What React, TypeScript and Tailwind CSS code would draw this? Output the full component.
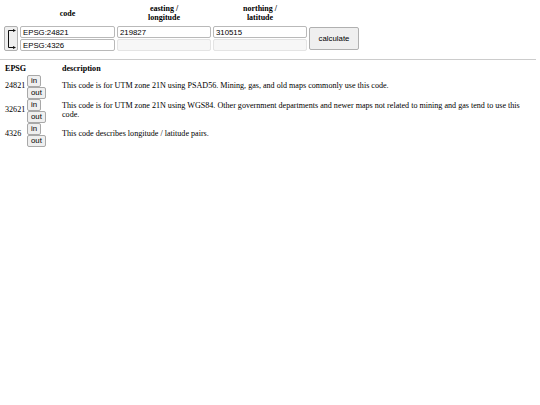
import type { ReactNode } from "react";

const serif = "font-['Liberation_Serif','Times_New_Roman',serif]";
const sans = "font-['Liberation_Sans',Arial,sans-serif]";

const SwapIcon = () => (
  <svg width="9" height="20" viewBox="0 0 9 20" fill="none" stroke="#111" strokeWidth="1">
    <path d="M7 1.5 H1.5 V18.5 H7" />
    <path d="M6 0 L9 1.5 L6 3 Z" fill="#111" stroke="none" />
    <path d="M6 17 L9 18.5 L6 20 Z" fill="#111" stroke="none" />
  </svg>
);

const Field = ({ value, disabled }: { value?: string; disabled?: boolean }) => (
  <input
    readOnly
    disabled={disabled}
    value={value ?? ""}
    className={`${sans} block h-[12px] w-full rounded-[2px] border px-[2px] text-[7.8px] leading-none text-black outline-none ${
      disabled ? "border-[#e4e4e4] bg-[#f7f7f7]" : "border-[#b9b9b9] bg-white"
    }`}
  />
);

const SmallButton = ({ children }: { children: ReactNode }) => (
  <button
    type="button"
    className={`${sans} block h-[12px] rounded-[2px] border border-[#a8a8a8] bg-[#efefef] px-[3px] text-[7.8px] leading-none text-black`}
  >
    {children}
  </button>
);

const Head = ({ children }: { children: ReactNode }) => (
  <div className={`${serif} flex items-center justify-center text-center text-[8px] font-bold leading-[9px] text-black`}>
    {children}
  </div>
);

const codes = [
  {
    epsg: "24821",
    text: "This code is for UTM zone 21N using PSAD56. Mining, gas, and old maps commonly use this code.",
  },
  {
    epsg: "32621",
    text: "This code is for UTM zone 21N using WGS84. Other government departments and newer maps not related to mining and gas tend to use this code.",
  },
  {
    epsg: "4326",
    text: "This code describes longitude / latitude pairs.",
  },
];

export default function App() {
  return (
    <div className={`${serif} h-[405px] w-[540px] bg-white text-black`}>
      <div className="grid grid-cols-[14px_95px_94px_94px_50px] grid-rows-[20px_12px_12px] gap-x-[2px] gap-y-[1px] pl-[4px] pt-[3px]">
        <div />
        <Head>code</Head>
        <Head>
          easting /<br />
          longitude
        </Head>
        <Head>
          northing /<br />
          latitude
        </Head>
        <div />

        <button
          type="button"
          className="row-span-2 mt-[2px] flex h-[25px] items-center justify-center rounded-[2px] border border-[#b0b0b0] bg-[#efefef]"
          aria-label="swap"
        >
          <SwapIcon />
        </button>
        <div className="mt-[2px]">
          <Field value="EPSG:24821" />
        </div>
        <div className="mt-[2px]">
          <Field value="219827" />
        </div>
        <div className="mt-[2px]">
          <Field value="310515" />
        </div>
        <button
          type="button"
          className={`${sans} row-span-2 mt-[3px] h-[23px] rounded-[2px] border border-[#b0b0b0] bg-[#efefef] text-[7.8px] text-black`}
        >
          calculate
        </button>
        <div className="mt-[2px]">
          <Field value="EPSG:4326" />
        </div>
        <div className="mt-[2px]">
          <Field disabled />
        </div>
        <div className="mt-[2px]">
          <Field disabled />
        </div>
      </div>

      <hr className="mr-[4px] mt-[10px] border-t border-[#cccccc]" />

      <div className="pl-[5px] pt-[5px] text-[8.1px] leading-[8.5px]">
        <div className="grid grid-cols-[57px_1fr] items-center">
          <div className="font-bold">EPSG</div>
          <div className="font-bold">description</div>
        </div>
        <div className="mt-[1px] flex flex-col">
          {codes.map((c) => (
            <div key={c.epsg} className="grid grid-cols-[22px_35px_1fr] items-center">
              <span>{c.epsg}</span>
              <div className="flex flex-col items-start">
                <SmallButton>in</SmallButton>
                <SmallButton>out</SmallButton>
              </div>
              <div className="pr-[12px]">{c.text}</div>
            </div>
          ))}
        </div>
      </div>
    </div>
  );
}
